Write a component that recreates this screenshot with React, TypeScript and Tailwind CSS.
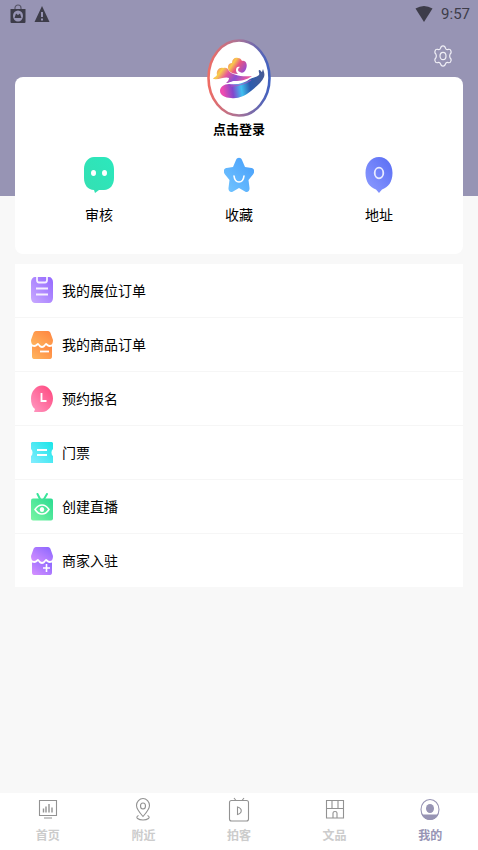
import type { ReactNode } from "react";

function Gradient({ id, from, to }: { id: string; from: string; to: string }) {
  return (
    <defs>
      <linearGradient id={id} x1="0" y1="1" x2="1" y2="0">
        <stop offset="0" stopColor={from} />
        <stop offset="1" stopColor={to} />
      </linearGradient>
    </defs>
  );
}

function StatusBar() {
  return (
    <div className="flex h-7 items-center justify-between pl-2.5 pr-2 text-[#3d3c49]">
      <div className="flex items-center gap-2">
        <svg className="h-5 w-4" viewBox="0 0 16 20" aria-hidden="true">
          <path d="M5 6V4a3 3 0 0 1 6 0v2" fill="none" stroke="currentColor" strokeOpacity=".7" strokeWidth="1.2" />
          <path d="M0.5 5h15v13a1 1 0 0 1-1 1h-13a1 1 0 0 1-1-1z" fill="currentColor" />
          <ellipse cx="8" cy="12" rx="5" ry="5.5" fill="#9794b4" />
          <path d="M4.5 14 6 9.5l2 1.5 2-1.5 1.5 4.5z" fill="currentColor" />
        </svg>
        <svg className="h-5 w-4" viewBox="0 0 16 20" aria-hidden="true">
          <path d="M8 2 15.5 18H0.5z" fill="currentColor" />
          <path d="M7 8h2v5H7zM7 14.5h2v2H7z" fill="#9794b4" />
        </svg>
      </div>
      <div className="flex items-center gap-2">
        <svg className="h-4 w-4.5" viewBox="0 0 18 16" aria-hidden="true">
          <path d="M0.5 2.5Q9-2.5 17.5 2.5L9 16z" fill="currentColor" />
        </svg>
        <span className="font-['Roboto',sans-serif] text-[15px] leading-5">9:57</span>
      </div>
    </div>
  );
}

function GearIcon() {
  return (
    <svg className="h-[22px] w-[18px]" viewBox="0 0 18 22" fill="none" stroke="#f0eff6" strokeWidth="1.2" strokeLinejoin="round" aria-hidden="true">
      <path d="M7 2Q9-.4 11 2l.8 1.800Q13 5 14.500 4.300q2-.3 2.400 1.700.7 1.800-.7 3-1 2 0 4 1.400 1.200.7 3-.4 2-2.400 1.700Q13 17 11.800 18.200L11 20q-2 2.400-4 0l-.8-1.800Q5 17 3.500 17.700q-2 .3-2.400-1.700-.7-1.800.7-3 1-2 0-4Q.4 7.800 1.100 6q.4-2 2.400-1.700Q5 5 6.200 3.800z" />
      <ellipse cx="9" cy="11" rx="3" ry="3.7" />
    </svg>
  );
}

function Avatar() {
  return (
    <svg className="h-[78px] w-16" viewBox="0 0 64 78" aria-hidden="true">
      <defs>
        <linearGradient id="ring" x1="0" x2="1" y1="0" y2="0">
          <stop offset="0" stopColor="#ef6c64" />
          <stop offset=".5" stopColor="#a87398" />
          <stop offset="1" stopColor="#3f61c0" />
        </linearGradient>
        <linearGradient id="curl" x1="0" x2="1" y1="0" y2=".6">
          <stop offset="0" stopColor="#f0587a" />
          <stop offset=".35" stopColor="#f8c94c" />
          <stop offset=".6" stopColor="#ea5580" />
          <stop offset="1" stopColor="#9a4ccc" />
        </linearGradient>
        <linearGradient id="cloud" x1="0" x2="1" y1="0" y2=".3">
          <stop offset="0" stopColor="#ec5585" />
          <stop offset=".25" stopColor="#f8cf4a" />
          <stop offset=".45" stopColor="#e6559a" />
          <stop offset=".7" stopColor="#8a50d2" />
          <stop offset="1" stopColor="#e85aa0" />
        </linearGradient>
        <linearGradient id="wave" x1="0" x2="1" y1=".1" y2="0">
          <stop offset="0" stopColor="#ee4bb0" />
          <stop offset=".22" stopColor="#8346cc" />
          <stop offset=".42" stopColor="#3fc0f0" />
          <stop offset=".62" stopColor="#2c5cae" />
          <stop offset="1" stopColor="#4a5a92" />
        </linearGradient>
      </defs>
      <ellipse cx="32" cy="39" rx="30.5" ry="37.5" fill="#fff" stroke="url(#ring)" strokeWidth="2.6" />
      <path d="M22 32c-2-4-1-8 3-8 0-4 3-6 6-5 2 0 3 1 4 3 4-1 6 4 4 8-1 3-4 5-6 3-3-1-2-4 0-5-2-1-4 0-4 3 0 2 1 3 2 4-4 0-7-1-9-3z" fill="url(#curl)" />
      <path d="M6 40c1-2 3-2 4-4-1-4 2-8 6-7 3-1 5 0 6 3 3 4 12 6 23 5-5 4-11 5-17 5-4 0-5 2-9 2 2-2 3-3 3-5-4-2-9 2-16 1z" fill="url(#cloud)" />
      <path d="M13 52c0-4 4-7 9-7 9 1 16-1 21-5 4-2 7-2 9-4 1-2-1-3 0-5 2 0 2 2 3 2l1-3c1 3 2 5 1 8-2 5-8 10-13 14-6 5-13 8-20 7-6 0-11-3-11-7z" fill="url(#wave)" />
      <path d="M24 47c7 0 14-2 20-6" fill="none" stroke="#bf4fc0" strokeWidth="1.4" strokeOpacity=".6" />
    </svg>
  );
}

const shortcuts: { label: string; icon: ReactNode }[] = [
  {
    label: "审核",
    icon: (
      <svg className="h-9 w-[30px]" viewBox="0 0 30 36" aria-hidden="true">
        <Gradient id="review" from="#35dfb2" to="#2be8bd" />
        <path d="M10 0h10c6 0 10 6 10 12v9c0 7-4 12-10 12h-5l-4 3-1-3C4 33 0 28 0 21v-9C0 6 4 0 10 0z" fill="url(#review)" />
        <ellipse cx="9.5" cy="16" rx="2.5" ry="3" fill="#fff" />
        <ellipse cx="20.5" cy="16" rx="2.5" ry="3" fill="#fff" />
      </svg>
    ),
  },
  {
    label: "收藏",
    icon: (
      <svg className="h-9 w-[30px]" viewBox="0 0 30 36" aria-hidden="true">
        <Gradient id="favorite" from="#74c6ff" to="#459dfb" />
        <path d="M12 3c1-3 5-3 6 0l3 7 6.500 1c3 .4 3.500 4 1.500 6.500L24.500 23l1 8c.3 3-2 5-4.500 3.500L15 31l-6 3.500c-2.500 1.500-4.800-.5-4.500-3.500l1-8L1 17.500C-1 15-.5 11.400 2.500 11L9 10z" fill="url(#favorite)" />
        <path d="M10 19c1 8 9 8 10 0" fill="none" stroke="#fff" strokeWidth="1.6" strokeLinecap="round" />
      </svg>
    ),
  },
  {
    label: "地址",
    icon: (
      <svg className="h-9 w-[30px]" viewBox="0 0 30 36" aria-hidden="true">
        <Gradient id="address" from="#8e9dff" to="#586cf4" />
        <path d="M15 0c8 0 13.500 7 13.500 16S24 30.500 18 32.500L15 36l-3-3.500C6 30.500 1.500 25 1.500 16S7 0 15 0z" fill="url(#address)" />
        <ellipse cx="15" cy="16" rx="4.3" ry="5.3" fill="none" stroke="#e8ebff" strokeWidth="1.8" />
      </svg>
    ),
  },
];

function ShopShape({ fill }: { fill: string }) {
  return (
    <>
      <path d="M5 0h12c1.500 0 2 1 2.500 2L22 9c0 3-1 5-3 5s-3-2-4-2-2 3-4 3-3-3-4-3-2 2-4 2-3-2-3-5l2.500-7C3 1 3.500 0 5 0z" fill={fill} />
      <path d="M1 15.500c3 1 5 0 6-1.500 2 4 6 4 8 0 1 1.500 3 2.500 6 1.500v10c0 2-1 2.500-3 2.500H4c-2 0-3-.5-3-2.500z" fill={fill} />
    </>
  );
}

const menu: { label: string; icon: ReactNode }[] = [
  {
    label: "我的展位订单",
    icon: (
      <>
        <Gradient id="booth" from="#c9aaff" to="#9468ff" />
        <path d="M4 0h14c2 0 4 2 4 5v16c0 3-2 5-4 5H4c-2 0-4-2-4-5V5c0-3 2-5 4-5z" fill="url(#booth)" />
        <path d="M6 0v3c0 2 1 2.500 2 2.500h6c1 0 2-.5 2-2.500V0M5 11.500h12M5 17.500h12" fill="none" stroke="#f5efff" strokeWidth="1.8" />
      </>
    ),
  },
  {
    label: "我的商品订单",
    icon: (
      <>
        <Gradient id="goods" from="#ffb65e" to="#ff833f" />
        <ShopShape fill="url(#goods)" />
        <path d="M9 20.500h9" stroke="#fff" strokeWidth="1.8" />
      </>
    ),
  },
  {
    label: "预约报名",
    icon: (
      <>
        <Gradient id="signup" from="#ff9bc3" to="#ff447c" />
        <path d="M11 0.500c6 0 11 6 11 13s-5 13.500-11 13.500H3l1-3C1 22 0 18 0 13.500 0 6.500 5 .5 11 .5z" fill="url(#signup)" />
        <path d="M10.500 8v8H15.500" fill="none" stroke="#fff" strokeWidth="1.8" />
      </>
    ),
  },
  {
    label: "门票",
    icon: (
      <>
        <Gradient id="ticket" from="#84edff" to="#18e5e8" />
        <path d="M1 3h20l1 1v6a3 4 0 0 0 0 7v7H0v-7a3 4 0 0 0 0-7V4z" fill="url(#ticket)" />
        <path d="M6 11h10M6 16h10" stroke="#fff" strokeWidth="1.8" />
      </>
    ),
  },
  {
    label: "创建直播",
    icon: (
      <>
        <Gradient id="live" from="#7af5a4" to="#2adb91" />
        <path d="m6.500 1 2.500 5M16 1l-3 5" stroke="#39e59b" strokeWidth="2" strokeLinecap="round" />
        <rect y="5.5" width="22" height="22" rx="2" fill="url(#live)" />
        <path d="M4 16.500c4-6 10-6 14 0-4 6-10 6-14 0z" fill="none" stroke="#fff" strokeWidth="1.5" />
        <ellipse cx="11" cy="16.5" rx="2.2" ry="2.6" fill="#fff" />
      </>
    ),
  },
  {
    label: "商家入驻",
    icon: (
      <>
        <Gradient id="merchant" from="#d791ff" to="#8865ff" />
        <ShopShape fill="url(#merchant)" />
        <path d="M12 21h7M15.5 17v8" stroke="#fff" strokeWidth="1.6" />
      </>
    ),
  },
];

const tabs: { label: string; active?: boolean; icon: ReactNode }[] = [
  {
    label: "首页",
    icon: (
      <>
        <path d="M2.5 3.500h17v15h-17zM7 21h8" />
        <path d="M6.500 15.500v-4M9 15.500v-6M12 15.500V7M15 15.500v-5" strokeWidth="1.4" />
      </>
    ),
  },
  {
    label: "附近",
    icon: (
      <>
        <path d="M11 19.500C7 15 4.500 12 4.500 8.500 4.500 5 7.500 1.500 11 1.500s6.500 3.500 6.500 7c0 3.500-2.500 6.500-6.500 11z" />
        <ellipse cx="11" cy="9" rx="2.5" ry="3" />
        <path d="M6.500 18.500c-4 2 0 4.500 4.500 4.500s8.500-2.500 4.500-4.500" />
      </>
    ),
  },
  {
    label: "拍客",
    icon: (
      <>
        <rect x="1.500" y="3.500" width="19" height="20.500" rx="2" />
        <path d="m6 1 2 2.500M16 1l-2 2.500M9.500 10v7.500c5-1.500 5-6 0-7.500z" />
      </>
    ),
  },
  {
    label: "文品",
    icon: <path d="M2.500 3.500h17v17.500h-17zM2.500 11.500h17M8 3.500v8M14 3.500v8M9 21v-5c0-1 1-1.500 2-1.500s2 .5 2 1.500v5" />,
  },
  {
    label: "我的",
    active: true,
    icon: (
      <>
        <ellipse cx="11" cy="12.500" rx="9" ry="10" />
        <ellipse cx="11" cy="11.500" rx="4" ry="4.500" fill="currentColor" stroke="none" />
        <path d="M3.500 18h15c-3 6-12 6-15 0z" fill="currentColor" />
      </>
    ),
  },
];

export default function App() {
  return (
    <div className="flex min-h-screen flex-col bg-[#f8f8f8] font-['Liberation_Sans','Noto_Sans_CJK_SC',sans-serif] text-black">
      <header className="h-[196px] bg-[#9794b4]">
        <StatusBar />
        <div className="flex justify-end px-[26px] pt-[17px]">
          <button type="button" aria-label="设置">
            <GearIcon />
          </button>
        </div>
      </header>

      <main className="-mt-[119px] flex flex-col gap-2.5 px-[15px] pb-6">
        <section className="rounded-lg bg-white px-3.5 pb-[29px]">
          <button type="button" className="mx-auto -mt-[38px] flex flex-col items-center gap-[3px] text-[13px] leading-5 font-bold">
            <Avatar />
            点击登录
          </button>
          <div className="mt-[17px] grid grid-cols-3">
            {shortcuts.map(({ label, icon }) => (
              <button key={label} type="button" className="flex flex-col items-center gap-3 text-sm leading-5">
                {icon}
                {label}
              </button>
            ))}
          </div>
        </section>

        <ul className="divide-y divide-[#f6f6f6] bg-white">
          {menu.map(({ label, icon }) => (
            <li key={label}>
              <button type="button" className="flex h-[53px] w-full items-center gap-[9px] px-4 text-left text-sm">
                <svg className="h-7 w-[22px]" viewBox="0 0 22 28" aria-hidden="true">
                  {icon}
                </svg>
                {label}
              </button>
            </li>
          ))}
        </ul>
      </main>

      <nav className="mt-auto grid h-[57px] grid-cols-5 bg-white">
        {tabs.map(({ label, active, icon }) => (
          <button
            key={label}
            type="button"
            aria-current={active ? "page" : undefined}
            className={`flex flex-col items-center gap-[3px] pt-1 text-xs leading-5 font-bold ${active ? "text-[#9794b4]" : "text-[#cccccc]"}`}
          >
            <svg
              className={`h-[26px] w-[22px] ${active ? "text-[#9794b4]" : "text-[#929292]"}`}
              viewBox="0 0 22 26"
              fill="none"
              stroke="currentColor"
              strokeWidth="1.1"
              aria-hidden="true"
            >
              {icon}
            </svg>
            {label}
          </button>
        ))}
      </nav>
    </div>
  );
}
